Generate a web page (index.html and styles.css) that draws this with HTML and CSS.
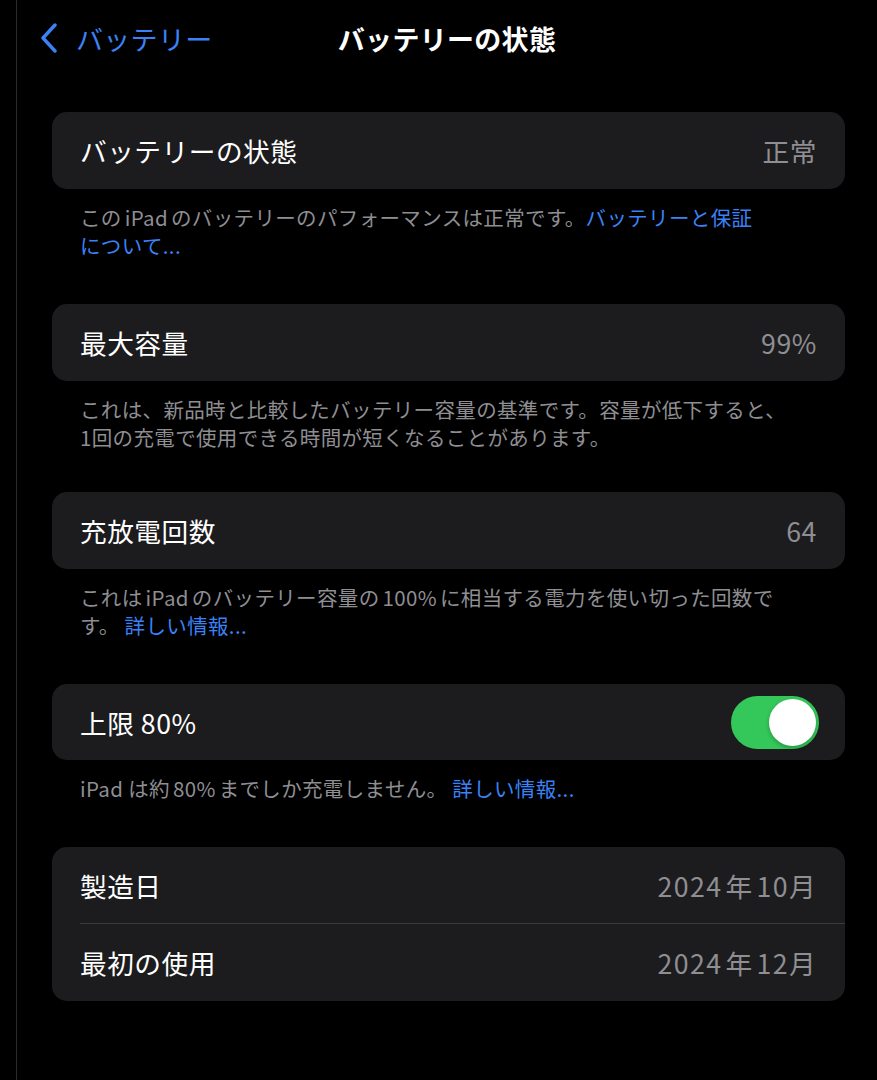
FILE: index.html
```html
<!DOCTYPE html>
<html lang="ja">
<head>
<meta charset="utf-8">
<link rel="stylesheet" href="styles.css">
</head>
<body>
<div class="page">
  <div class="sidebar"></div>
  <div class="main">
    <header class="nav">
      <a class="back">
        <svg class="chev" width="20" height="30" viewBox="0 0 20 30"><path d="M16 2 L4 15 L16 28" fill="none" stroke="#3b82f6" stroke-width="3.4" stroke-linecap="round" stroke-linejoin="round"/></svg>
        <span>バッテリー</span>
      </a>
      <h1 class="title">バッテリーの状態</h1>
    </header>

    <section class="group">
      <div class="card">
        <div class="row"><span class="label">バッテリーの状態</span><span class="value">正常</span></div>
      </div>
      <p class="foot">この<span class="lat">iPad</span>のバッテリーのパフォーマンスは正常です。<a class="link">バッテリーと保証<br>について...</a></p>
    </section>

    <section class="group">
      <div class="card">
        <div class="row"><span class="label">最大容量</span><span class="value">99%</span></div>
      </div>
      <p class="foot">これは、新品時と比較したバッテリー容量の基準です。容量が低下すると、<br>1回の充電で使用できる時間が短くなることがあります。</p>
    </section>

    <section class="group tight">
      <div class="card">
        <div class="row"><span class="label">充放電回数</span><span class="value">64</span></div>
      </div>
      <p class="foot">これは<span class="lat">iPad</span>のバッテリー容量の<span class="lat">100%</span>に相当する電力を使い切った回数で<br>す。 <a class="link">詳しい情報...</a></p>
    </section>

    <section class="group">
      <div class="card">
        <div class="row short"><span class="label">上限 80%</span><span class="toggle"><span class="knob"></span></span></div>
      </div>
      <p class="foot">iPad は約<span class="lat">80%</span>までしか充電しません。 <a class="link">詳しい情報...</a></p>
    </section>

    <section class="group">
      <div class="card">
        <div class="row sep"><span class="label">製造日</span><span class="value date">2024<span class="lat">年</span>10月</span></div>
        <div class="row"><span class="label">最初の使用</span><span class="value date">2024<span class="lat">年</span>12月</span></div>
      </div>
    </section>
  </div>
</div>
</body>
</html>
```

FILE: styles.css
```css
html, body {
  margin: 0;
  padding: 0;
  background: #000;
}
body {
  font-family: "Noto Sans CJK JP", "Noto Sans", sans-serif;
  color: #fff;
  width: 877px;
  height: 1080px;
  overflow: hidden;
}
.page {
  display: flex;
  height: 1080px;
}
.sidebar {
  width: 16px;
  border-right: 1px solid #2a2a2c;
  flex: none;
}
.main {
  flex: 1;
  padding: 0 32px 0 35px;
}
.nav {
  position: relative;
  height: 76px;
  display: flex;
  align-items: center;
  margin: 0 -32px 0 -35px;
}
.back {
  display: flex;
  align-items: center;
  gap: 17px;
  margin-left: 22px;
  color: #3b82f6;
  font-size: 27px;
  letter-spacing: 0.3px;
}
.chev {
  display: block;
}
.title {
  position: absolute;
  left: 0;
  right: 0;
  top: 0;
  height: 76px;
  margin: 0;
  display: flex;
  align-items: center;
  justify-content: center;
  font-size: 27px;
  font-weight: 700;
  letter-spacing: 0.3px;
  pointer-events: none;
}
.group {
  margin-top: 36px;
}
.group + .group {
  margin-top: 45px;
}
.group + .group.tight {
  margin-top: 41px;
}
.card {
  background: #1c1c1e;
  border-radius: 15px;
  overflow: hidden;
}
.row {
  height: 77px;
  display: flex;
  align-items: center;
  justify-content: space-between;
  padding: 0 28px;
  font-size: 26.7px;
  position: relative;
}
.row.short {
  height: 76px;
}
.row.sep::after {
  content: "";
  position: absolute;
  left: 28px;
  right: 0;
  bottom: 0;
  height: 1px;
  background: #3a3a3c;
}
.label {
  color: #fff;
  letter-spacing: 0.5px;
}
.value {
  color: #8e8e93;
  letter-spacing: 0.6px;
}
.value.date {
  letter-spacing: 1.4px;
}
.lat {
  margin: 0 3px;
}
.foot {
  margin: 14px 0 0;
  padding: 0 28px;
  font-size: 20.5px;
  line-height: 28px;
  color: #8e8e93;
  letter-spacing: 0.35px;
}
.link {
  color: #3b82f6;
}
.toggle {
  width: 88px;
  height: 53px;
  border-radius: 27px;
  background: #34c759;
  position: relative;
  margin-right: -2px;
}
.knob {
  position: absolute;
  right: 3px;
  top: 3px;
  width: 47px;
  height: 47px;
  border-radius: 50%;
  background: #fff;
  box-shadow: 0 2px 4px rgba(0,0,0,0.25);
}
```
